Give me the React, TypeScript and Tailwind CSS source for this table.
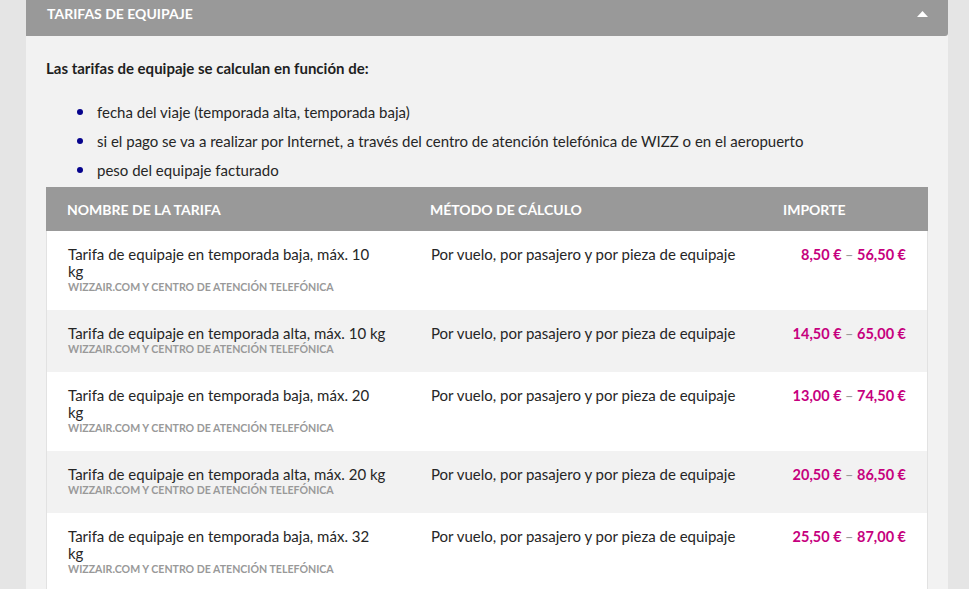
import React from "react";

const rows = [
  { name: ["Tarifa de equipaje en temporada baja, máx. 10", "kg"], from: "8,50 €", to: "56,50 €" },
  { name: ["Tarifa de equipaje en temporada alta, máx. 10 kg"], from: "14,50 €", to: "65,00 €" },
  { name: ["Tarifa de equipaje en temporada baja, máx. 20", "kg"], from: "13,00 €", to: "74,50 €" },
  { name: ["Tarifa de equipaje en temporada alta, máx. 20 kg"], from: "20,50 €", to: "86,50 €" },
  { name: ["Tarifa de equipaje en temporada baja, máx. 32", "kg"], from: "25,50 €", to: "87,00 €" },
];

export default function App() {
  return (
    <div
      className="w-[969px] h-[589px] overflow-hidden bg-[#e5e5e5] pl-[26px] pr-[21px]"
      style={{ fontFamily: "Lato, 'Open Sans', sans-serif" }}
    >
      <div className="bg-[#f2f2f2] h-full">
        <div className="h-[36px] bg-[#999999] rounded-br-[3px] flex items-start justify-between pl-[21px] pr-[20px] pt-[5px]">
          <span className="text-white font-bold text-[14px] leading-[18px]">TARIFAS DE EQUIPAJE</span>
          <svg width="11" height="6" viewBox="0 0 11 6" className="mt-[6px]">
            <path d="M0 6 L5.5 0 L11 6 Z" fill="#ffffff" />
          </svg>
        </div>
        <div className="pl-[20px] pr-[20px]">
          <p className="mt-[22px] text-[15px] leading-[20px] font-bold text-[#1f1f1f]">
            Las tarifas de equipaje se calculan en función de:
          </p>
          <ul className="mt-[19px] pl-[31px] text-[15px] leading-[20px] text-[#262626]">
            {[
              "fecha del viaje (temporada alta, temporada baja)",
              "si el pago se va a realizar por Internet, a través del centro de atención telefónica de WIZZ o en el aeropuerto",
              "peso del equipaje facturado",
            ].map((t) => (
              <li key={t} className="flex items-center h-[29px]">
                <span className="w-[6px] h-[6px] rounded-full bg-[#06038d] mr-[14px] shrink-0" />
                {t}
              </li>
            ))}
          </ul>
          <div className="mt-[3px]">
            <div className="h-[44px] bg-[#999999] grid grid-cols-[363px_353px_1fr] items-center pl-[21px] pr-[21px] text-white font-bold text-[14px]">
              <span>NOMBRE DE LA TARIFA</span>
              <span>MÉTODO DE CÁLCULO</span>
              <span>IMPORTE</span>
            </div>
            {rows.map((r, i) => (
              <div
                key={i}
                className={`grid grid-cols-[363px_1fr_auto] pl-[21px] pr-[21px] py-[15px] border-x border-[#e2e2e2] ${
                  i % 2 === 0 ? "bg-white" : "bg-[#f2f2f2]"
                }`}
              >
                <div>
                  <div className="text-[15px] leading-[17px] text-[#262626]">
                    {r.name.map((l, j) => (
                      <div key={j}>{l}</div>
                    ))}
                  </div>
                  <div className="text-[10.6px] leading-[15px] font-bold text-[#999999]">
                    WIZZAIR.COM Y CENTRO DE ATENCIÓN TELEFÓNICA
                  </div>
                </div>
                <div className="text-[15px] leading-[17px] text-[#262626]">
                  Por vuelo, por pasajero y por pieza de equipaje
                </div>
                <div className="text-[14.5px] leading-[17px] font-bold text-[#c6007e] text-right">
                  {r.from} <span className="text-[#999999] font-normal">–</span> {r.to}
                </div>
              </div>
            ))}
          </div>
        </div>
      </div>
    </div>
  );
}
